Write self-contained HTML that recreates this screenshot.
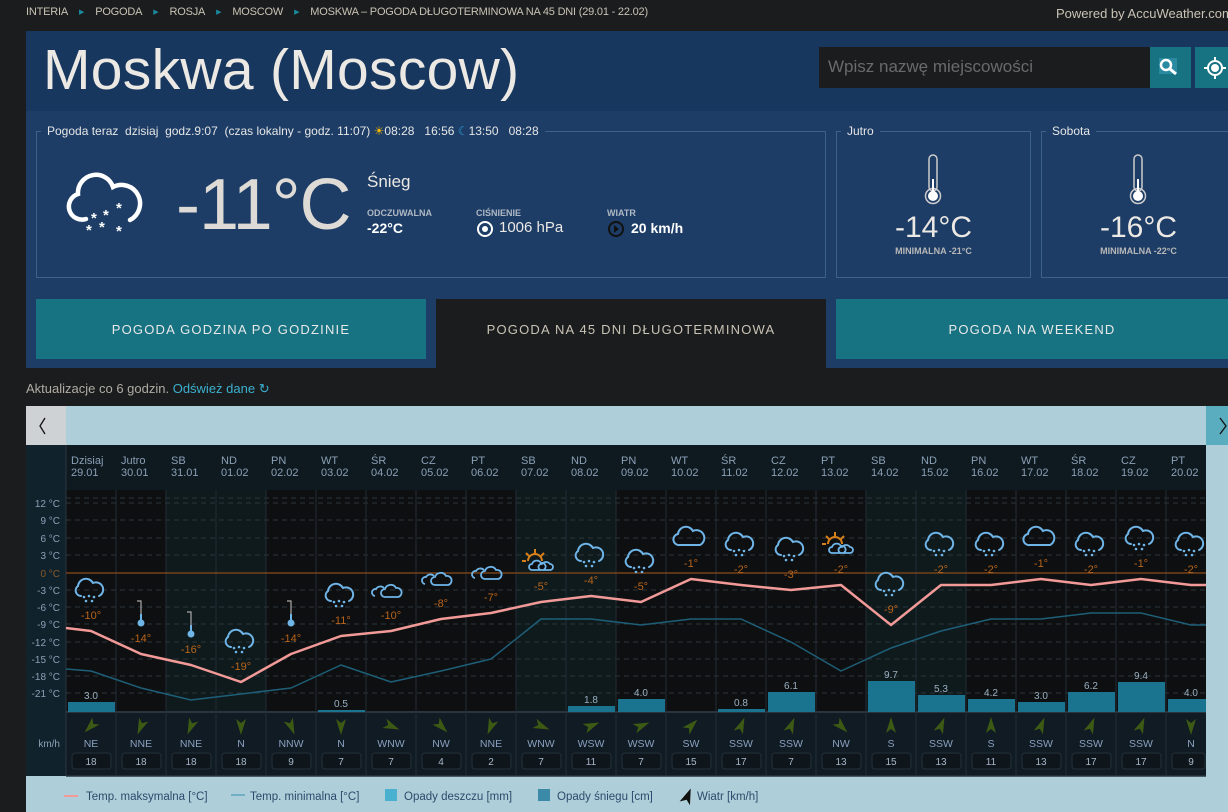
<!DOCTYPE html>
<html><head><meta charset="utf-8">
<style>
*{margin:0;padding:0;box-sizing:border-box}
body{width:1228px;height:812px;overflow:hidden;background:#1b1c1e;font-family:"Liberation Sans",sans-serif;position:relative}
.a{position:absolute;white-space:nowrap}
.bc{top:6px;left:26px;font-size:11px;color:#c9c3b5;text-transform:uppercase;letter-spacing:-0.2px}
.bc span{color:#1a8aa0;font-size:7px;margin:0 11px;position:relative;top:-1px}
.fs{border:1px solid #3d6289;position:absolute}
.lg{position:absolute;top:-8px;background:#1d3d66;padding:0 6px;font-size:12px;color:#e6e6e6}
.tab{position:absolute;display:flex;align-items:center;justify-content:center;font-size:13px;letter-spacing:1.2px;color:#e8e8e8}
</style></head><body>
<div class="a bc">Interia<span>▶</span>Pogoda<span>▶</span>Rosja<span>▶</span>Moscow<span>▶</span>Moskwa – pogoda długoterminowa na 45 dni (29.01 - 22.02)</div>
<div class="a" style="top:6px;left:1056px;font-size:13px;color:#c9c3b5">Powered by AccuWeather.com</div>

<div class="a" style="left:26px;top:31px;width:1202px;height:80px;background:#17375e"></div>
<div class="a" style="left:26px;top:111px;width:1202px;height:257px;background:#1d3d66"></div>
<div class="a" style="left:43px;top:37px;font-size:57px;color:#ece9e4;letter-spacing:0.3px">Moskwa (Moscow)</div>
<div class="a" style="left:819px;top:47px;width:331px;height:41px;background:#1b1c1e;color:#6a6a6a;font-size:17px;padding:10px 0 0 9px">Wpisz nazwę miejscowości</div>
<div class="a" style="left:1150px;top:47px;width:41px;height:41px;background:#177282"></div>
<svg class="a" style="left:1158px;top:57px" width="24" height="22"><rect x="1" y="1" width="18" height="16" fill="#2a8aa0"/><circle cx="8" cy="8" r="5" stroke="#fff" stroke-width="2.5" fill="none"/><path d="M12 12 L18 17" stroke="#fff" stroke-width="3"/></svg>
<div class="a" style="left:1195px;top:47px;width:33px;height:41px;background:#177282"></div>
<svg class="a" style="left:1203px;top:56px" width="24" height="24"><circle cx="12" cy="12" r="7" stroke="#fff" stroke-width="2" fill="none"/><circle cx="12" cy="12" r="4" fill="#fff"/><path d="M12 1v4M12 19v4M1 12h4M19 12h4" stroke="#fff" stroke-width="2"/></svg>

<div class="fs" style="left:36px;top:131px;width:790px;height:147px">
<div class="lg" style="left:4px">Pogoda teraz&nbsp; dzisiaj&nbsp; godz.9:07&nbsp; (czas lokalny - godz. 11:07) <span style="color:#f5b800">☀</span>08:28&nbsp;&nbsp; 16:56 <span style="color:#2a9ad8">☾</span>13:50&nbsp;&nbsp; 08:28</div>
</div>
<svg class="a" style="left:66px;top:170px" width="82" height="70"><path d="M20 49 A13 13 0 0 1 12 24 A18 18 0 0 1 47 17 A12 12 0 0 1 64 50" stroke="#fff" stroke-width="4.5" fill="none" stroke-linecap="round"/><g fill="#fff" font-size="15" font-weight="bold"><text x="25" y="53">*</text><text x="37" y="50">*</text><text x="50" y="43">*</text><text x="20" y="65">*</text><text x="33" y="62">*</text><text x="50" y="66">*</text></g></svg>
<div class="a" style="left:176px;top:164px;font-size:72px;color:#dedbd6;letter-spacing:-1px">-11°C</div>
<div class="a" style="left:367px;top:172px;font-size:17px;color:#ece9e4">Śnieg</div>
<div class="a" style="left:367px;top:208px;font-size:9px;color:#b0b8c4;font-weight:bold">ODCZUWALNA</div>
<div class="a" style="left:367px;top:220px;font-size:14px;color:#fff;font-weight:bold">-22°C</div>
<div class="a" style="left:476px;top:208px;font-size:9px;color:#b0b8c4;font-weight:bold">CIŚNIENIE</div>
<svg class="a" style="left:476px;top:220px" width="18" height="18"><circle cx="9" cy="9" r="7" stroke="#fff" stroke-width="2" fill="none"/><circle cx="9" cy="9" r="3" fill="#fff"/></svg>
<div class="a" style="left:499px;top:219px;font-size:15px;color:#ece9e4">1006 hPa</div>
<div class="a" style="left:607px;top:208px;font-size:9px;color:#b0b8c4;font-weight:bold">WIATR</div>
<svg class="a" style="left:607px;top:220px" width="18" height="18"><circle cx="9" cy="9" r="7" stroke="#111" stroke-width="2" fill="#1d3d66"/><path d="M7 5 L12 9 L7 13Z" fill="#111"/></svg>
<div class="a" style="left:631px;top:220px;font-size:14px;color:#fff;font-weight:bold">20 km/h</div>

<div class="fs" style="left:836px;top:131px;width:195px;height:147px"><div class="lg" style="left:4px">Jutro</div></div>
<div class="fs" style="left:1041px;top:131px;width:200px;height:147px"><div class="lg" style="left:4px">Sobota</div></div>
<svg class="a" style="left:922px;top:153px" width="22" height="54"><rect x="7" y="2" width="8" height="36" rx="4" stroke="#ccc" stroke-width="1.5" fill="none"/><circle cx="11" cy="43" r="7.5" stroke="#ccc" stroke-width="1.5" fill="none"/><circle cx="11" cy="43" r="5" fill="#fff"/><rect x="10" y="26" width="2" height="14" fill="#fff"/></svg>
<svg class="a" style="left:1127px;top:153px" width="22" height="54"><rect x="7" y="2" width="8" height="36" rx="4" stroke="#ccc" stroke-width="1.5" fill="none"/><circle cx="11" cy="43" r="7.5" stroke="#ccc" stroke-width="1.5" fill="none"/><circle cx="11" cy="43" r="5" fill="#fff"/><rect x="10" y="26" width="2" height="14" fill="#fff"/></svg>
<div class="a" style="left:836px;top:211px;width:195px;text-align:center;font-size:30px;color:#ece9e4">-14°C</div>
<div class="a" style="left:836px;top:246px;width:195px;text-align:center;font-size:9px;color:#b8b8b8;font-weight:bold">MINIMALNA -21°C</div>
<div class="a" style="left:1041px;top:211px;width:195px;text-align:center;font-size:30px;color:#ece9e4">-16°C</div>
<div class="a" style="left:1041px;top:246px;width:195px;text-align:center;font-size:9px;color:#b8b8b8;font-weight:bold">MINIMALNA -22°C</div>

<div class="tab" style="left:36px;top:299px;width:390px;height:60px;background:#177282">POGODA GODZINA PO GODZINIE</div>
<div class="tab" style="left:436px;top:299px;width:390px;height:69px;background:#1b1c1e;color:#c9c3b5;padding-bottom:9px">POGODA NA 45 DNI DŁUGOTERMINOWA</div>
<div class="tab" style="left:836px;top:299px;width:392px;height:60px;background:#177282">POGODA NA WEEKEND</div>

<div class="a" style="left:26px;top:381px;font-size:13px;color:#b0aca4">Aktualizacje co 6 godzin. <span style="color:#3bb0d0">Odśwież dane</span> <span style="color:#3bb0d0">↻</span></div>

<svg class="a" style="left:0;top:0" width="1228" height="812" viewBox="0 0 1228 812">
<defs>
<g id="cl"><path d="M9 21 A5.5 5.5 0 0 1 7 10 A8 8 0 0 1 22 7 A6 6 0 0 1 29 21 Z" stroke="#6fb5e8" stroke-width="2" fill="none"/></g>
<g id="sn"><path d="M10 20 A5.5 5.5 0 0 1 7 10 A8 8 0 0 1 22 7 A6 6 0 0 1 28 20" stroke="#6fb5e8" stroke-width="2" fill="none" stroke-linecap="round"/><g fill="#6fb5e8"><circle cx="13" cy="21" r="1.3"/><circle cx="18" cy="20" r="1.3"/><circle cx="23" cy="21" r="1.3"/><circle cx="15" cy="25" r="1.3"/><circle cx="21" cy="25" r="1.3"/></g></g>
<g id="pc"><path d="M4 20 A3.5 3.5 0 0 1 5 13 A5 5 0 0 1 13 12" stroke="#6fb5e8" stroke-width="1.8" fill="none"/><path d="M14 21 A4 4 0 0 1 14 13 A6 6 0 0 1 25 12 A4.5 4.5 0 0 1 27 21 Z" stroke="#6fb5e8" stroke-width="1.8" fill="none"/></g>
<g id="su"><path d="M7 14 A7 7 0 0 1 21 14" stroke="#d8801a" stroke-width="2" fill="none"/><path d="M14 2v4M5 6l3 3M23 6l-3 3M1 14h4" stroke="#d8801a" stroke-width="2"/><path d="M11 23 A3 3 0 0 1 11 17 A5 5 0 0 1 20 16 A3.5 3.5 0 0 1 22 23 Z M20 23 A3 3 0 0 1 21 17 A5 5 0 0 1 29 17 A3 3 0 0 1 29 23 Z" stroke="#6fb5e8" stroke-width="1.8" fill="#0e0f11"/></g>
<g id="th"><path d="M16 2 h4 v20" stroke="#aaa" stroke-width="1.2" fill="none"/><circle cx="20" cy="24" r="3.5" fill="#6fb5e8"/><path d="M20 15v8" stroke="#6fb5e8" stroke-width="2"/></g>
<path id="ar" d="M0 9 L-5 -7 L0 -3 L5 -7 Z" fill="#3d5a14"/>
</defs>
<rect x="26" y="406" width="1202" height="406" fill="#aecfd9"/>
<rect x="26" y="406" width="40" height="39" fill="#cfd2d4"/>
<path d="M45 418 L40 426 L45 434" stroke="#111" stroke-width="1.3" fill="none"/>
<rect x="1206" y="406" width="22" height="39" fill="#5aacbf"/>
<path d="M1220 418 L1226 426 L1220 434" stroke="#111" stroke-width="1.3" fill="none"/>
<rect x="26" y="445" width="40" height="331" fill="#10222c"/>
<rect x="66" y="445" width="1140" height="45" fill="#0f1920"/>
<rect x="66" y="490" width="1140" height="222" fill="#0e0f11"/>
<g fill="#0f1a1d"><rect x="166" y="490" width="100" height="222"/><rect x="516" y="490" width="100" height="222"/><rect x="866" y="490" width="100" height="222"/></g>
<rect x="66" y="712" width="1140" height="64" fill="#111b23"/>
<line x1="66" y1="445" x2="66" y2="776" stroke="#2a3540"/>
<line x1="66" y1="712" x2="1206" y2="712" stroke="#2a3540" stroke-width="2"/>
<g stroke="#2c343c" stroke-dasharray="5 4"><path d="M66 498H1206M66 503H1206M66 520H1206M66 538H1206M66 555H1206M66 590H1206M66 607H1206M66 624H1206M66 642H1206M66 659H1206M66 676H1206M66 693H1206"/></g>
<g stroke="#222c35"><path d="M116 490V776M166 490V776M216 490V776M266 490V776M316 490V776M366 490V776M416 490V776M466 490V776M516 490V776M566 490V776M616 490V776M666 490V776M716 490V776M766 490V776M816 490V776M866 490V776M916 490V776M966 490V776M1016 490V776M1066 490V776M1116 490V776M1166 490V776"/></g>
<line x1="66" y1="573" x2="1206" y2="573" stroke="#8a4a1a" stroke-width="1.2"/>
<g font-size="10" fill="#8aa0b5" text-anchor="end"><text x="60" y="507">12 °C</text><text x="60" y="524">9 °C</text><text x="60" y="542">6 °C</text><text x="60" y="559">3 °C</text><text x="60" y="577" fill="#8a5a2a">0 °C</text><text x="60" y="594">-3 °C</text><text x="60" y="611">-6 °C</text><text x="60" y="628">-9 °C</text><text x="60" y="646">-12 °C</text><text x="60" y="663">-15 °C</text><text x="60" y="680">-18 °C</text><text x="60" y="697">-21 °C</text><text x="60" y="747">km/h</text></g>
<g font-size="11" fill="#8aa0b5">
<text x="71" y="464">Dzisiaj</text><text x="71" y="476">29.01</text>
<text x="121" y="464">Jutro</text><text x="121" y="476">30.01</text>
<text x="171" y="464">SB</text><text x="171" y="476">31.01</text>
<text x="221" y="464">ND</text><text x="221" y="476">01.02</text>
<text x="271" y="464">PN</text><text x="271" y="476">02.02</text>
<text x="321" y="464">WT</text><text x="321" y="476">03.02</text>
<text x="371" y="464">ŚR</text><text x="371" y="476">04.02</text>
<text x="421" y="464">CZ</text><text x="421" y="476">05.02</text>
<text x="471" y="464">PT</text><text x="471" y="476">06.02</text>
<text x="521" y="464">SB</text><text x="521" y="476">07.02</text>
<text x="571" y="464">ND</text><text x="571" y="476">08.02</text>
<text x="621" y="464">PN</text><text x="621" y="476">09.02</text>
<text x="671" y="464">WT</text><text x="671" y="476">10.02</text>
<text x="721" y="464">ŚR</text><text x="721" y="476">11.02</text>
<text x="771" y="464">CZ</text><text x="771" y="476">12.02</text>
<text x="821" y="464">PT</text><text x="821" y="476">13.02</text>
<text x="871" y="464">SB</text><text x="871" y="476">14.02</text>
<text x="921" y="464">ND</text><text x="921" y="476">15.02</text>
<text x="971" y="464">PN</text><text x="971" y="476">16.02</text>
<text x="1021" y="464">WT</text><text x="1021" y="476">17.02</text>
<text x="1071" y="464">ŚR</text><text x="1071" y="476">18.02</text>
<text x="1121" y="464">CZ</text><text x="1121" y="476">19.02</text>
<text x="1171" y="464">PT</text><text x="1171" y="476">20.02</text>
</g>
<g fill="#1a7490"><rect x="68" y="702" width="47" height="10"/><rect x="318" y="710" width="47" height="2"/><rect x="568" y="706" width="47" height="6"/><rect x="618" y="699" width="47" height="13"/><rect x="718" y="709" width="47" height="3"/><rect x="768" y="692" width="47" height="20"/><rect x="868" y="681" width="47" height="31"/><rect x="918" y="695" width="47" height="17"/><rect x="968" y="699" width="47" height="13"/><rect x="1018" y="702" width="47" height="10"/><rect x="1068" y="692" width="47" height="20"/><rect x="1118" y="682" width="47" height="30"/><rect x="1168" y="699" width="38" height="13"/></g>
<g font-size="10" fill="#9ab0c0" text-anchor="middle"><text x="91" y="699">3.0</text><text x="341" y="707">0.5</text><text x="591" y="703">1.8</text><text x="641" y="696">4.0</text><text x="741" y="706">0.8</text><text x="791" y="689">6.1</text><text x="891" y="678">9.7</text><text x="941" y="692">5.3</text><text x="991" y="696">4.2</text><text x="1041" y="699">3.0</text><text x="1091" y="689">6.2</text><text x="1141" y="679">9.4</text><text x="1191" y="696">4.0</text></g>
<polyline points="66,669 91,671 141,688 191,700 241,694 291,688 341,665 391,682 441,671 491,659 541,619 591,619 641,625 691,619 741,619 791,642 841,671 891,648 941,631 991,619 1041,619 1091,613 1141,613 1191,625 1206,625" fill="none" stroke="#1e5f78" stroke-width="1.5" stroke-linejoin="round"/>
<polyline points="66,628 91,631 141,654 191,665 241,682 291,654 341,636 391,631 441,619 491,613 541,602 591,596 641,602 691,579 741,585 791,590 841,585 891,625 941,585 991,585 1041,579 1091,585 1141,579 1191,585 1206,585" fill="none" stroke="#f29a98" stroke-width="2.5" stroke-linejoin="round"/>
<use href="#sn" x="71" y="576"/><use href="#th" x="121" y="599"/><use href="#th" x="171" y="610"/><use href="#sn" x="221" y="627"/><use href="#th" x="271" y="599"/><use href="#sn" x="321" y="581"/><use href="#pc" x="371" y="576"/><use href="#pc" x="421" y="564"/><use href="#pc" x="471" y="558"/><use href="#su" x="521" y="547"/><use href="#sn" x="571" y="541"/><use href="#sn" x="621" y="547"/><use href="#cl" x="671" y="524"/><use href="#sn" x="721" y="530"/><use href="#sn" x="771" y="535"/><use href="#su" x="821" y="530"/><use href="#sn" x="871" y="570"/><use href="#sn" x="921" y="530"/><use href="#sn" x="971" y="530"/><use href="#cl" x="1021" y="524"/><use href="#sn" x="1071" y="530"/><use href="#sn" x="1121" y="524"/><use href="#sn" x="1171" y="530"/>
<g font-size="11" fill="#b8651a" text-anchor="middle"><text x="91" y="619">-10°</text><text x="141" y="642">-14°</text><text x="191" y="653">-16°</text><text x="241" y="670">-19°</text><text x="291" y="642">-14°</text><text x="341" y="624">-11°</text><text x="391" y="619">-10°</text><text x="441" y="607">-8°</text><text x="491" y="601">-7°</text><text x="541" y="590">-5°</text><text x="591" y="584">-4°</text><text x="641" y="590">-5°</text><text x="691" y="567">-1°</text><text x="741" y="573">-2°</text><text x="791" y="578">-3°</text><text x="841" y="573">-2°</text><text x="891" y="613">-9°</text><text x="941" y="573">-2°</text><text x="991" y="573">-2°</text><text x="1041" y="567">-1°</text><text x="1091" y="573">-2°</text><text x="1141" y="567">-1°</text><text x="1191" y="573">-2°</text></g>
<use href="#ar" transform="translate(91 726) rotate(45)"/><use href="#ar" transform="translate(141 726) rotate(22.5)"/><use href="#ar" transform="translate(191 726) rotate(22.5)"/><use href="#ar" transform="translate(241 726)"/><use href="#ar" transform="translate(291 726) rotate(337.5)"/><use href="#ar" transform="translate(341 726)"/><use href="#ar" transform="translate(391 726) rotate(292.5)"/><use href="#ar" transform="translate(441 726) rotate(315)"/><use href="#ar" transform="translate(491 726) rotate(22.5)"/><use href="#ar" transform="translate(541 726) rotate(292.5)"/><use href="#ar" transform="translate(591 726) rotate(247.5)"/><use href="#ar" transform="translate(641 726) rotate(247.5)"/><use href="#ar" transform="translate(691 726) rotate(225)"/><use href="#ar" transform="translate(741 726) rotate(202.5)"/><use href="#ar" transform="translate(791 726) rotate(202.5)"/><use href="#ar" transform="translate(841 726) rotate(315)"/><use href="#ar" transform="translate(891 726) rotate(180)"/><use href="#ar" transform="translate(941 726) rotate(202.5)"/><use href="#ar" transform="translate(991 726) rotate(180)"/><use href="#ar" transform="translate(1041 726) rotate(202.5)"/><use href="#ar" transform="translate(1091 726) rotate(202.5)"/><use href="#ar" transform="translate(1141 726) rotate(202.5)"/><use href="#ar" transform="translate(1191 726)"/>
<g font-size="10.5" fill="#8aa0c0" text-anchor="middle"><text x="91" y="747">NE</text><text x="141" y="747">NNE</text><text x="191" y="747">NNE</text><text x="241" y="747">N</text><text x="291" y="747">NNW</text><text x="341" y="747">N</text><text x="391" y="747">WNW</text><text x="441" y="747">NW</text><text x="491" y="747">NNE</text><text x="541" y="747">WNW</text><text x="591" y="747">WSW</text><text x="641" y="747">WSW</text><text x="691" y="747">SW</text><text x="741" y="747">SSW</text><text x="791" y="747">SSW</text><text x="841" y="747">NW</text><text x="891" y="747">S</text><text x="941" y="747">SSW</text><text x="991" y="747">S</text><text x="1041" y="747">SSW</text><text x="1091" y="747">SSW</text><text x="1141" y="747">SSW</text><text x="1191" y="747">N</text></g>
<g fill="#0e161c" stroke="#24303a"><rect x="72" y="753" width="39" height="16" rx="3"/><rect x="122" y="753" width="39" height="16" rx="3"/><rect x="172" y="753" width="39" height="16" rx="3"/><rect x="222" y="753" width="39" height="16" rx="3"/><rect x="272" y="753" width="39" height="16" rx="3"/><rect x="322" y="753" width="39" height="16" rx="3"/><rect x="372" y="753" width="39" height="16" rx="3"/><rect x="422" y="753" width="39" height="16" rx="3"/><rect x="472" y="753" width="39" height="16" rx="3"/><rect x="522" y="753" width="39" height="16" rx="3"/><rect x="572" y="753" width="39" height="16" rx="3"/><rect x="622" y="753" width="39" height="16" rx="3"/><rect x="672" y="753" width="39" height="16" rx="3"/><rect x="722" y="753" width="39" height="16" rx="3"/><rect x="772" y="753" width="39" height="16" rx="3"/><rect x="822" y="753" width="39" height="16" rx="3"/><rect x="872" y="753" width="39" height="16" rx="3"/><rect x="922" y="753" width="39" height="16" rx="3"/><rect x="972" y="753" width="39" height="16" rx="3"/><rect x="1022" y="753" width="39" height="16" rx="3"/><rect x="1072" y="753" width="39" height="16" rx="3"/><rect x="1122" y="753" width="39" height="16" rx="3"/><rect x="1172" y="753" width="33" height="16" rx="3"/></g>
<g font-size="10" fill="#a8b8c8" text-anchor="middle"><text x="91" y="765">18</text><text x="141" y="765">18</text><text x="191" y="765">18</text><text x="241" y="765">18</text><text x="291" y="765">9</text><text x="341" y="765">7</text><text x="391" y="765">7</text><text x="441" y="765">4</text><text x="491" y="765">2</text><text x="541" y="765">7</text><text x="591" y="765">11</text><text x="641" y="765">7</text><text x="691" y="765">15</text><text x="741" y="765">17</text><text x="791" y="765">7</text><text x="841" y="765">13</text><text x="891" y="765">15</text><text x="941" y="765">13</text><text x="991" y="765">11</text><text x="1041" y="765">13</text><text x="1091" y="765">17</text><text x="1141" y="765">17</text><text x="1191" y="765">9</text></g>
<line x1="66" y1="776" x2="1206" y2="776" stroke="#2a3540" stroke-width="1.5"/>
<line x1="64" y1="796" x2="78" y2="796" stroke="#f29a98" stroke-width="2"/>
<line x1="231" y1="795" x2="245" y2="795" stroke="#4a9ab8" stroke-width="1.2"/>
<rect x="385" y="789" width="12" height="12" fill="#4ab0d0"/>
<rect x="538" y="789" width="12" height="12" fill="#3a8aa8"/>
<path d="M688 788 L682 804 L688 800 L693 804 Z" fill="#111" transform="rotate(20 688 796)"/>
<g font-size="11.5" fill="#2d4a6b"><text x="86" y="800">Temp. maksymalna [°C]</text><text x="250" y="800">Temp. minimalna [°C]</text><text x="404" y="800">Opady deszczu [mm]</text><text x="557" y="800">Opady śniegu [cm]</text><text x="697" y="800">Wiatr [km/h]</text></g>
</svg>
</body></html>
